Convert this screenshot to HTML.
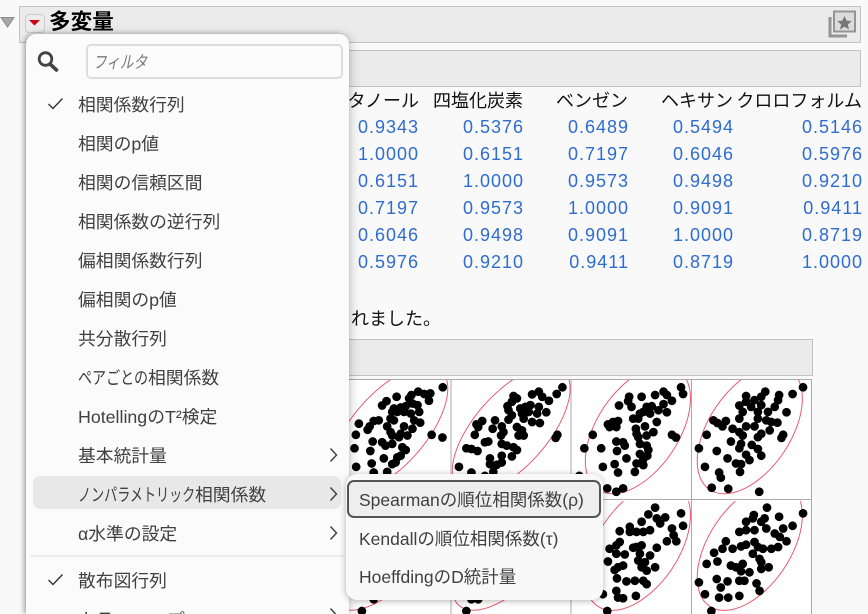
<!DOCTYPE html>
<html lang="ja"><head><meta charset="utf-8"><title>多変量</title>
<style>
html,body{margin:0;padding:0;width:868px;height:614px;overflow:hidden;background:#f9f9f9}
#root{position:absolute;left:0;top:0;width:868px;height:614px;overflow:hidden;background:#f9f9f9;font-family:"Liberation Sans","Noto Sans CJK JP",sans-serif;color:#111}
.abs,.bar,.h,.n,.mi,.si{position:absolute}
.bar{background:#ebebeb;border:1px solid #c2c2c2;box-sizing:border-box}
.h{top:88px;height:26px;line-height:26px;font-size:18px;white-space:nowrap;text-align:right;width:200px;color:#111}
.n{width:100px;text-align:right;font-size:18px;letter-spacing:1px;height:27px;line-height:27px;color:#2f6cd0}
#menu{position:absolute;left:26px;top:34px;width:323px;height:580px;overflow:hidden;background:#fbfbfb;border-radius:10px 10px 0 0;box-shadow:-2px 0 5px rgba(0,0,0,.28),2px 1px 10px rgba(0,0,0,.2)}
.mi{left:52px;font-size:17.8px;line-height:30px;height:30px;color:#404040;white-space:nowrap}
.k{display:inline-block;transform-origin:0 50%;white-space:nowrap}
#sub{position:absolute;left:346px;top:474px;width:257px;height:126px;background:#f9f9f9;border-radius:11px;box-shadow:0 1px 7px rgba(0,0,0,.3)}
.si{left:13px;font-size:17.5px;line-height:30px;height:30px;color:#404040;white-space:nowrap}
</style></head><body><div id="root">
<div class="bar" style="left:19px;top:6px;width:842px;height:37px"></div>
<div class="bar" style="left:100px;top:50px;width:761px;height:37px"></div>
<svg class="abs" style="left:0;top:15px" width="16" height="14"><path d="M1 2.500H14L7.500 12Z" fill="#a8a8a8" stroke="#8a8a8a"/></svg>
<div class="abs" style="left:25px;top:14px;width:18px;height:17px;background:#ececec;border:1px solid #ccc;border-radius:4px"></div>
<svg class="abs" style="left:27px;top:18px" width="16" height="10"><path d="M2 2H13L7.500 7.500Z" fill="#d00010"/></svg>
<div class="abs" style="left:49px;top:8px;font-size:21.6px;font-weight:700;line-height:28px;color:#000">多変量</div>
<svg class="abs" style="left:826px;top:8px" width="32" height="32"><rect x="8" y="3.500" width="21" height="20" fill="#dcdcdc" stroke="#949494" stroke-width="2"/><path d="M4 9V28H21" fill="none" stroke="#949494" stroke-width="3"/><path d="M18.500 8l2.200 4.600 5 .5-3.800 3.400 1.100 5-4.500-2.700-4.500 2.700 1.100-5-3.800-3.400 5-.5z" fill="#777"/></svg>

<div class="h" style="left:219px">エタノール</div>
<div class="h" style="left:323px">四塩化炭素</div>
<div class="h" style="left:428px">ベンゼン</div>
<div class="h" style="left:533px">ヘキサン</div>
<div class="h" style="left:662px">クロロフォルム</div>

<div class="n" style="left:319px;top:114px">0.9343</div><div class="n" style="left:424px;top:114px">0.5376</div><div class="n" style="left:529px;top:114px">0.6489</div><div class="n" style="left:634px;top:114px">0.5494</div><div class="n" style="left:763px;top:114px">0.5146</div>
<div class="n" style="left:319px;top:141px">1.0000</div><div class="n" style="left:424px;top:141px">0.6151</div><div class="n" style="left:529px;top:141px">0.7197</div><div class="n" style="left:634px;top:141px">0.6046</div><div class="n" style="left:763px;top:141px">0.5976</div>
<div class="n" style="left:319px;top:168px">0.6151</div><div class="n" style="left:424px;top:168px">1.0000</div><div class="n" style="left:529px;top:168px">0.9573</div><div class="n" style="left:634px;top:168px">0.9498</div><div class="n" style="left:763px;top:168px">0.9210</div>
<div class="n" style="left:319px;top:195px">0.7197</div><div class="n" style="left:424px;top:195px">0.9573</div><div class="n" style="left:529px;top:195px">1.0000</div><div class="n" style="left:634px;top:195px">0.9091</div><div class="n" style="left:763px;top:195px">0.9411</div>
<div class="n" style="left:319px;top:222px">0.6046</div><div class="n" style="left:424px;top:222px">0.9498</div><div class="n" style="left:529px;top:222px">0.9091</div><div class="n" style="left:634px;top:222px">1.0000</div><div class="n" style="left:763px;top:222px">0.8719</div>
<div class="n" style="left:319px;top:249px">0.5976</div><div class="n" style="left:424px;top:249px">0.9210</div><div class="n" style="left:529px;top:249px">0.9411</div><div class="n" style="left:634px;top:249px">0.8719</div><div class="n" style="left:763px;top:249px">1.0000</div>

<div class="abs" style="left:333px;top:306px;font-size:18px;line-height:26px;white-space:nowrap;color:#111">されました。</div>
<div class="bar" style="left:200px;top:339px;width:613px;height:37px"></div>

<svg class="abs" style="left:0;top:0" width="868" height="614">
<defs>
<clipPath id="c1"><rect x="0" y="240" width="332" height="358"/></clipPath>
<clipPath id="c2"><rect x="332" y="240" width="356" height="358"/></clipPath>
<clipPath id="c3"><rect x="688" y="240" width="356" height="358"/></clipPath>
<clipPath id="c4"><rect x="1044" y="240" width="356" height="358"/></clipPath>
<clipPath id="d1"><rect x="0" y="600" width="332" height="340"/></clipPath>
<clipPath id="d2"><rect x="332" y="600" width="356" height="340"/></clipPath>
<clipPath id="d3"><rect x="688" y="600" width="356" height="340"/></clipPath>
<clipPath id="d4"><rect x="1044" y="600" width="356" height="340"/></clipPath>
</defs>
<rect x="300" y="379.500" width="511.500" height="234.500" fill="#fff"/>
<path d="M300 379.500H811.500V614M451 380V614M571 380V614M691.500 380V614M300 499.500H811" stroke="#aaa" fill="none"/>
<g transform="translate(340 299) scale(.337)">
<g fill="none" stroke="#ea5a70" stroke-width="3">
<g clip-path="url(#c1)"><ellipse cx="145" cy="388" rx="234" ry="108.600" transform="rotate(-48.600 145 388)"/></g>
<g clip-path="url(#c2)"><ellipse cx="508" cy="388" rx="234" ry="108.600" transform="rotate(-48.600 508 388)"/></g>
<g clip-path="url(#c3)"><ellipse cx="884" cy="388" rx="214" ry="121" transform="rotate(-56.100 884 388)"/></g>
<g clip-path="url(#c4)"><ellipse cx="1216" cy="388" rx="214" ry="121" transform="rotate(-56.100 1216 388)"/></g>
<g clip-path="url(#d1)"><ellipse cx="145" cy="734" rx="234" ry="108.600" transform="rotate(-48.600 145 734)"/></g>
<g clip-path="url(#d2)"><ellipse cx="508" cy="734" rx="234" ry="108.600" transform="rotate(-48.600 508 734)"/></g>
<g clip-path="url(#d3)"><ellipse cx="884" cy="734" rx="214" ry="121" transform="rotate(-56.100 884 734)"/></g>
<g clip-path="url(#d4)"><ellipse cx="1216" cy="734" rx="214" ry="121" transform="rotate(-56.100 1216 734)"/></g>
</g>
<path fill="none" stroke="#000" stroke-width="26" stroke-linecap="round" d="M305 262h0M268 280h0M264 302h0M250 282h0M232 275h0M212 285h0M205 295h0M168 290h0M138 303h0M125 316h0M160 325h0M180 322h0M195 318h0M215 310h0M230 315h0M235 335h0M210 340h0M190 335h0M170 335h0M155 335h0M150 355h0M160 360h0M220 360h0M238 367h0M115 360h0M100 362h0M88 378h0M82 388h0M56 370h0M140 378h0M150 395h0M190 378h0M215 385h0M200 405h0M180 400h0M175 410h0M155 405h0M272 403h0M304 411h0M47 403h0M97 423h0M125 425h0M135 435h0M155 430h0M185 440h0M195 448h0M43 443h0M90 451h0M130 473h0M180 465h0M170 470h0M165 485h0M155 490h0M94 488h0M48 498h0M100 515h0M140 513h0
M660 262h0M643 282h0M620 302h0M590 275h0M570 283h0M600 290h0M515 288h0M525 295h0M510 305h0M497 318h0M500 330h0M535 325h0M550 320h0M565 315h0M590 320h0M612 336h0M585 340h0M560 335h0M540 340h0M510 345h0M500 358h0M545 355h0M570 365h0M593 368h0M460 360h0M422 362h0M405 372h0M410 380h0M453 385h0M480 378h0M525 380h0M485 395h0M478 405h0M540 390h0M530 405h0M545 405h0M645 403h0M640 412h0M400 403h0M430 425h0M440 423h0M480 430h0M495 435h0M515 440h0M525 448h0M375 443h0M390 445h0M408 451h0M445 473h0M480 465h0M510 467h0M480 485h0M465 492h0M445 490h0M353 498h0M390 515h0M430 525h0M455 513h0
M1012 262h0M1018 282h0M985 302h0M960 275h0M970 285h0M935 285h0M895 290h0M858 290h0M855 303h0M828 316h0M865 320h0M910 320h0M925 318h0M960 312h0M945 330h0M970 336h0M900 335h0M890 340h0M920 340h0M870 355h0M885 355h0M825 362h0M810 365h0M795 372h0M800 380h0M820 380h0M940 365h0M878 385h0M905 378h0M930 395h0M880 400h0M885 410h0M910 405h0M985 403h0M997 411h0M750 403h0M820 423h0M840 425h0M845 435h0M890 430h0M910 435h0M915 448h0M725 443h0M775 443h0M822 451h0M890 460h0M912 465h0M850 473h0M900 475h0M880 488h0M900 493h0M815 490h0M780 498h0M825 515h0M875 513h0M710 525h0M793 562h0M840 562h0M820 572h0
M1374 262h0M1343 282h0M1303 285h0M1262 275h0M1250 290h0M1205 288h0M1300 300h0M1230 300h0M1205 305h0M1185 316h0M1220 320h0M1250 315h0M1290 320h0M1325 336h0M1270 335h0M1240 335h0M1195 335h0M1185 355h0M1240 355h0M1108 360h0M1120 368h0M1135 378h0M1145 362h0M1265 360h0M1280 365h0M1298 367h0M1165 385h0M1205 378h0M1230 378h0M1185 395h0M1195 405h0M1275 390h0M1250 400h0M1240 410h0M1315 403h0M1310 412h0M1088 403h0M1160 423h0M1190 430h0M1185 443h0M1222 433h0M1240 445h0M1065 443h0M1118 451h0M1205 462h0M1250 465h0M1150 473h0M1215 478h0M1190 490h0M1175 488h0M1083 498h0M1187 513h0M1125 515h0M1130 530h0M1103 560h0M1152 563h0M1244 572h0"/>
<path transform="translate(0 -4)" fill="none" stroke="#000" stroke-width="26" stroke-linecap="round" d="M935 623h0M1012 640h0M895 665h0M915 643h0M940 655h0M965 652h0M950 670h0M860 680h0M830 693h0M1018 677h0M985 685h0M860 695h0M880 695h0M900 695h0M920 690h0M990 705h0M998 723h0M970 723h0M830 725h0M820 735h0M800 745h0M880 740h0M895 735h0M940 742h0M920 765h0M870 742h0M890 760h0M820 760h0M845 762h0M795 783h0M885 780h0M905 785h0M825 800h0M840 795h0M815 808h0M935 800h0M895 800h0M910 810h0M822 833h0M850 842h0M875 840h0M900 840h0M910 850h0M780 880h0M820 870h0M825 890h0M840 892h0M878 885h0M793 930h0
M1267 623h0M1374 640h0M1303 650h0M1228 645h0M1225 655h0M1205 665h0M1260 655h0M1250 665h0M1343 677h0M1315 685h0M1185 695h0M1205 690h0M1230 690h0M1265 685h0M1290 700h0M1305 710h0M1325 723h0M1145 723h0M1135 745h0M1165 745h0M1190 738h0M1205 733h0M1230 725h0M1240 740h0M1255 745h0M1280 745h0M1300 740h0M1110 757h0M1225 760h0M1245 775h0M1250 785h0M1120 783h0M1088 790h0M1160 795h0M1175 800h0M1195 790h0M1190 812h0M1215 815h0M1250 805h0M1272 800h0M1118 835h0M1150 842h0M1185 840h0M1200 840h0M1236 848h0M1065 845h0M1130 860h0M1245 870h0M1083 880h0M1125 890h0M1152 890h0M1185 885h0M1102 930h0M65 930h0M375 930h0M100 895h0M390 895h0M410 895h0"/>
</g>
</svg>

<div id="menu">
<svg class="abs" style="left:10px;top:16px" width="24" height="24"><circle cx="9.500" cy="9" r="6.300" fill="none" stroke="#444" stroke-width="2.800"/><path d="M14 14l6.500 6" stroke="#444" stroke-width="3.600" stroke-linecap="round"/></svg>
<div class="abs" style="left:60px;top:10px;width:257px;height:35px;box-sizing:border-box;border:2px solid #dcdcdc;border-radius:5px;background:#fbfbfb;font-size:17px;font-style:italic;color:#777;padding-left:5px;line-height:33px"><span class="k" style="transform:scaleX(.8)">フィルタ</span></div>
<svg class="abs" style="left:21px;top:62px" width="18" height="16"><path d="M1.500 8l4.500 4.500L15.500 2.500" fill="none" stroke="#333" stroke-width="1.400"/></svg>
<div class="mi" style="top:56px">相関係数行列</div>
<div class="mi" style="top:95px">相関のp値</div>
<div class="mi" style="top:134px">相関の信頼区間</div>
<div class="mi" style="top:173px">相関係数の逆行列</div>
<div class="mi" style="top:212px">偏相関係数行列</div>
<div class="mi" style="top:251px">偏相関のp値</div>
<div class="mi" style="top:290px">共分散行列</div>
<div class="mi" style="top:329px"><span class="k" style="width:70px;transform:scaleX(.79)">ペアごとの</span>相関係数</div>
<div class="mi" style="top:368px">HotellingのT²検定</div>
<div class="mi" style="top:407px">基本統計量</div>
<div class="abs" style="left:7px;top:442px;width:308px;height:33px;background:#e8e8e8;border-radius:7px"></div>
<div class="mi" style="top:446px"><span class="k" style="width:117px;transform:scaleX(.735)">ノンパラメトリック</span>相関係数</div>
<div class="mi" style="top:485px">α水準の設定</div>
<div class="abs" style="left:4px;top:521px;width:314px;height:2px;background:#ececec"></div>
<svg class="abs" style="left:21px;top:538px" width="18" height="16"><path d="M1.500 8l4.500 4.500L15.500 2.500" fill="none" stroke="#333" stroke-width="1.400"/></svg>
<div class="mi" style="top:532px">散布図行列</div>
<div class="mi" style="top:571px;height:9px;overflow:hidden;line-height:30px">カラーマップ</div>
<svg class="abs" style="left:302px;top:412px" width="12" height="18"><path d="M2.500 2.500l6 6.500-6 6.500" fill="none" stroke="#444" stroke-width="1.500"/></svg>
<svg class="abs" style="left:302px;top:451px" width="12" height="18"><path d="M2.500 2.500l6 6.500-6 6.500" fill="none" stroke="#444" stroke-width="1.500"/></svg>
<svg class="abs" style="left:302px;top:490px" width="12" height="18"><path d="M2.500 2.500l6 6.500-6 6.500" fill="none" stroke="#444" stroke-width="1.500"/></svg>
<svg class="abs" style="left:302px;top:572px" width="12" height="8"><path d="M2.500 2.500l5 5.500" fill="none" stroke="#444" stroke-width="1.500"/></svg>
</div>

<div id="sub">
<div class="abs" style="left:1px;top:6px;width:254px;height:38px;box-sizing:border-box;border:2px solid #555;border-radius:7px;background:#eee"></div>
<div class="si" style="top:11px">Spearmanの順位相関係数(ρ)</div>
<div class="si" style="top:50px">Kendallの順位相関係数(τ)</div>
<div class="si" style="top:88px">HoeffdingのD統計量</div>
</div>
</div></body></html>
